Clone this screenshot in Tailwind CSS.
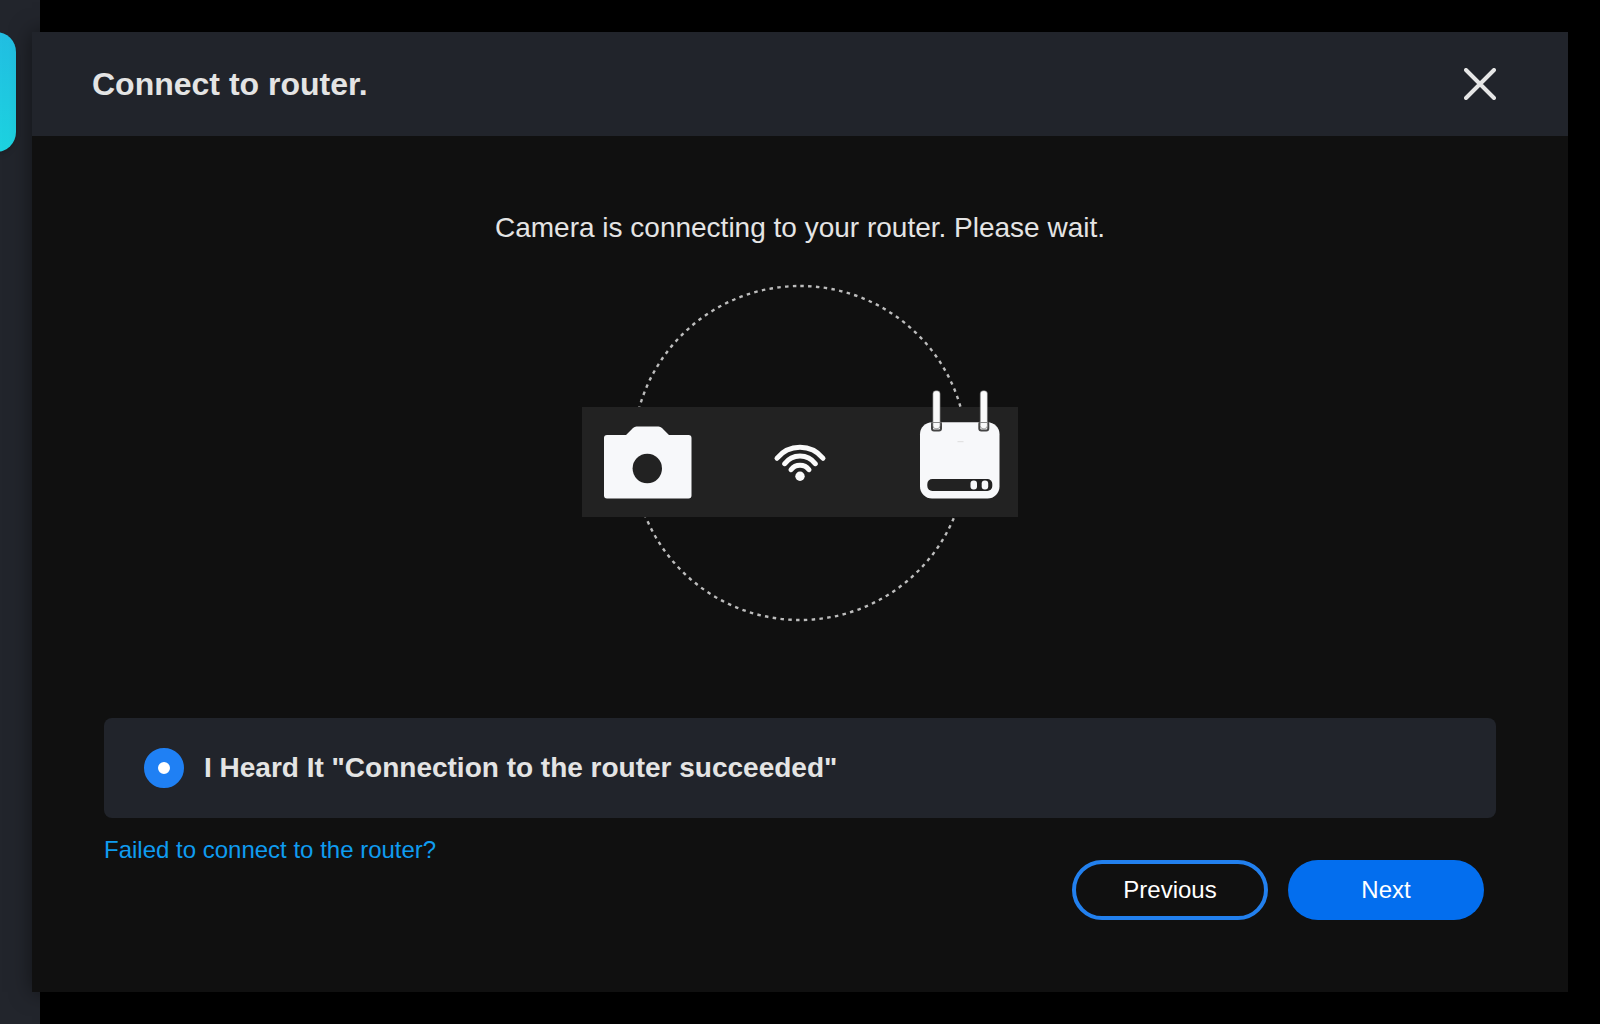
<!DOCTYPE html>
<html lang="en">
<head>
    <meta charset="UTF-8">
    <meta name="viewport" content="width=device-width, initial-scale=1.0">
    <title>Connect to router</title>
    <script src="https://cdn.jsdelivr.net/npm/@tailwindcss/browser@4"></script>
</head>
<body class="bg-black font-['Liberation_Sans',Arial,sans-serif] text-[#e4e4e4]">
    <div class="relative min-h-screen flex p-8">
        <!-- page behind the dialog -->
        <aside class="absolute inset-y-0 left-0 w-10 bg-[#22252c] pt-8">
            <div class="w-10 -ml-6 h-[120px] rounded-[20px] bg-linear-to-b from-[#22bee2] to-[#1dd3e0] shadow-md"></div>
        </aside>

        <div role="dialog" aria-labelledby="dialogTitle" class="relative flex-1 flex flex-col bg-[#101010] shadow-[0_0_20px_rgba(0,0,0,0.5)]">
            <header class="h-[104px] flex items-center justify-between pl-[60px] pr-[72px] bg-[#21242b]">
                <h1 id="dialogTitle" class="text-[32px] leading-10 font-bold">Connect to router.</h1>
                <button type="button" aria-label="Close" class="cursor-pointer">
                    <svg class="w-8 h-8" viewBox="0 0 32 32" fill="none" stroke="#e6e6e6" stroke-width="4" stroke-linecap="round">
                        <path d="M2 2l28 28M30 2l-28 28"/>
                    </svg>
                </button>
            </header>

            <main class="flex-1 flex flex-col px-[72px] pt-[72px]">
                <p class="text-[28px] leading-10 text-center">Camera is connecting to your router. Please wait.</p>

                <svg class="w-[436px] h-[340px] mt-[35px] mx-auto shrink-0" viewBox="0 0 436 340" aria-hidden="true">
                    <circle cx="218" cy="170" r="167" fill="none" stroke="#bdbdbd" stroke-width="2.400" stroke-dasharray="3.500 4.330" stroke-dashoffset="-0.300" transform="rotate(-90 218 170)"/>
                    <rect y="124" width="436" height="110" fill="#222"/>

                    <!-- camera -->
                    <path fill="#f7f8fa" d="M25 152h19l7-7q1.500-1.500 3.500-1.500h22q2 0 3.500 1.500l7 7h19.500q3 0 3 3v57.500q0 3-3 3H25q-3 0-3-3V155q0-3 3-3z"/>
                    <circle cx="65.300" cy="185.500" r="14.700" fill="#222"/>

                    <!-- wifi -->
                    <g fill="none" stroke="#fafafa" stroke-width="5" stroke-linecap="round">
                        <path d="M195 175.300a29.500 29.500 0 0 1 46 0"/>
                        <path d="M202.700 180.700a19 19 0 0 1 30.600 0"/>
                        <path d="M209 186.700a11.400 11.400 0 0 1 18 0"/>
                    </g>
                    <circle cx="218" cy="193.300" r="4.700" fill="#fafafa"/>

                    <!-- router -->
                    <rect x="338" y="139.300" width="79.500" height="76.200" rx="12" fill="#f7f8fa"/>
                    <g stroke="#444" stroke-width="2" fill="#fafafa">
                        <rect x="350" y="139" width="9" height="8.500" rx="2"/>
                        <rect x="397.300" y="139" width="9" height="8.500" rx="2"/>
                    </g>
                    <g fill="#fafafa" stroke="#666" stroke-width="0.600">
                        <rect x="350.900" y="107.700" width="7.200" height="38" rx="3"/>
                        <rect x="398.200" y="107.700" width="7.200" height="38" rx="3"/>
                    </g>
                    <path d="M350.500 139.500h8M397.800 139.500h8" stroke="#888"/>
                    <path d="M375.500 158.700h6" stroke="#ddd"/>
                    <rect x="345.300" y="196" width="65" height="12" rx="5" fill="#222"/>
                    <rect x="388.500" y="197.500" width="6.500" height="9" rx="3" fill="#f7f8fa"/>
                    <rect x="399.700" y="197.500" width="6.500" height="9" rx="3" fill="#f7f8fa"/>
                </svg>

                <label class="mt-[95px] h-[100px] flex items-center gap-5 px-10 rounded-lg bg-[#21242b] text-[28px] leading-10 font-bold cursor-pointer">
                    <input type="radio" name="heard" checked class="appearance-none w-10 h-10 shrink-0 rounded-full bg-white border-[14px] border-[#1f80f4]">
                    <span>I Heard It "Connection to the router succeeded"</span>
                </label>

                <div class="flex items-start justify-between text-2xl">
                    <a href="#" class="mt-4 text-[#0f9cf0]">Failed to connect to the router?</a>
                    <div class="flex gap-5 mt-[42px] mr-3">
                        <button type="button" class="w-[196px] h-[60px] rounded-full border-4 border-[#2280ee] text-white cursor-pointer">Previous</button>
                        <button type="button" class="w-[196px] h-[60px] rounded-full bg-[#036eee] text-white cursor-pointer">Next</button>
                    </div>
                </div>
            </main>
        </div>
    </div>
</body>
</html>
